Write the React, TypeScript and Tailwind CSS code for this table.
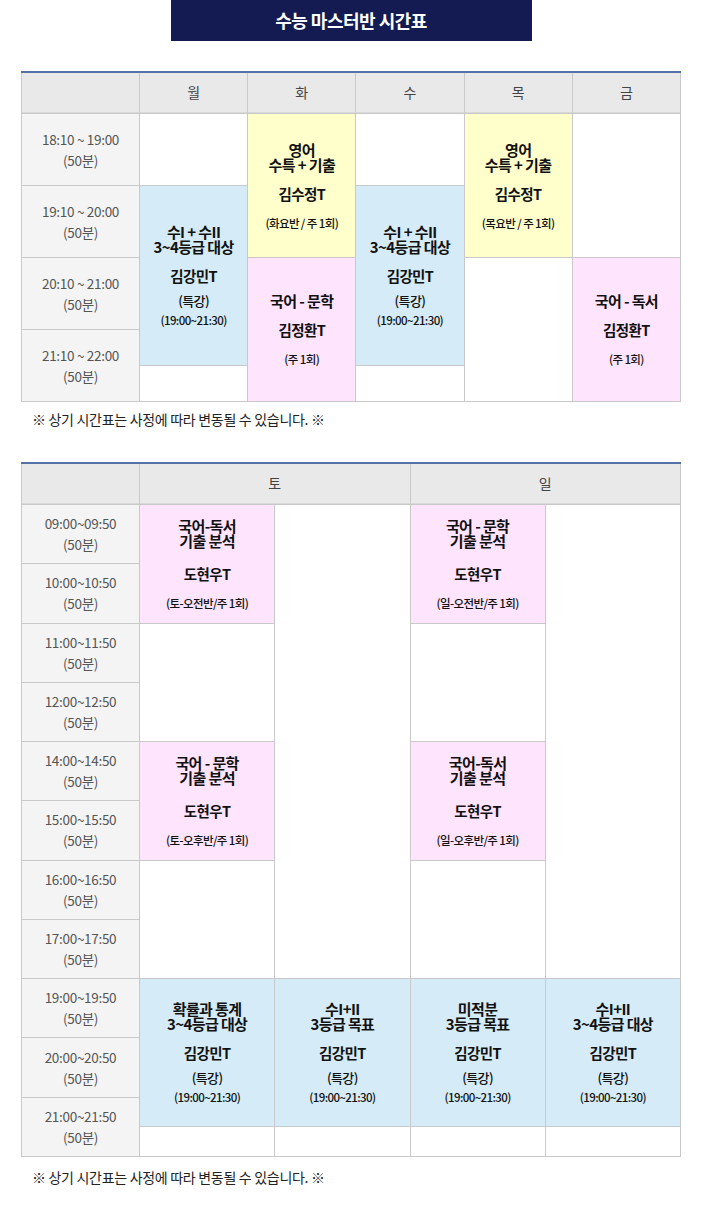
type Tone = 'yellow' | 'blue' | 'pink' | 'white';

const toneBg: Record<Tone, string> = {
  yellow: 'bg-[#ffffcc]',
  blue: 'bg-[#d5ebf7]',
  pink: 'bg-[#ffe4fd]',
  white: 'bg-white',
};

type Lesson = {
  title: string[];
  teacher: string;
  note?: string;
  extra?: string;
};

function LessonBody({ lesson, wide }: { lesson: Lesson; wide?: boolean }) {
  return (
    <div className="flex flex-col items-center text-center text-[#111] tracking-[-0.6px]">
      <div className="text-[15px] font-bold leading-[15px]">
        {lesson.title.map((t) => (
          <p key={t}>{t}</p>
        ))}
      </div>
      <p className={`text-[14.5px] font-bold leading-[15px] ${wide ? 'mt-[18px]' : 'mt-[14px]'}`}>{lesson.teacher}</p>
      {lesson.extra ? (
        <>
          <p className="mt-[10px] text-[13px] font-medium leading-[15px]">{lesson.extra}</p>
          <p className="mt-[6px] text-[11.5px] font-medium leading-[13px]">{lesson.note}</p>
        </>
      ) : (
        <p className="mt-[16px] text-[11.5px] font-medium leading-[13px]">{lesson.note}</p>
      )}
    </div>
  );
}

function Cell({ className, tone, children }: { className: string; tone: Tone; children?: React.ReactNode }) {
  return <div className={`${className} ${toneBg[tone]} flex items-center justify-center`}>{children}</div>;
}

function TimeCell({ className, range }: { className: string; range: string }) {
  return (
    <div className={`${className} bg-[#f4f4f4] flex flex-col items-center justify-center text-[13.5px] leading-[21px] text-[#555] tracking-[-0.3px]`}>
      <p>{range}</p>
      <p>(50분)</p>
    </div>
  );
}

function HeadCell({ className, label }: { className: string; label?: string }) {
  return (
    <div className={`${className} bg-[#e9e9e9] border-b border-[#d9d9d9] flex items-center justify-center text-[14px] text-[#444]`}>
      {label}
    </div>
  );
}

function Note({ className }: { className: string }) {
  return (
    <p className={`${className} pl-[11px] text-[14px] leading-[20px] text-[#222] tracking-[-0.3px]`}>
      ※ 상기 시간표는 사정에 따라 변동될 수 있습니다. ※
    </p>
  );
}

const math34: Lesson = { title: ['수I + 수II', '3~4등급 대상'], teacher: '김강민T', extra: '(특강)', note: '(19:00~21:30)' };

export default function App() {
  return (
    <div className="w-[702px] bg-white font-['Noto_Sans_CJK_KR',sans-serif] pb-[39px]">
      {/* title */}
      <div className="flex justify-center">
        <div className="w-[361px] h-[41px] bg-[#131b52] flex items-center justify-center text-white text-[18px] font-bold tracking-[-0.5px]">
          수능 마스터반 시간표
        </div>
      </div>

      <div className="mx-[21px]">
        {/* weekday table */}
        <div className="mt-[30px] border-t-2 border-[#5571a9]">
          <div className="grid grid-cols-[117px_repeat(5,minmax(0,1fr))] grid-rows-[40px_repeat(8,35px)] gap-px bg-[#c9c9c9] px-px pb-px">
            <HeadCell className="col-start-1 row-start-1" />
            <HeadCell className="col-start-2 row-start-1" label="월" />
            <HeadCell className="col-start-3 row-start-1" label="화" />
            <HeadCell className="col-start-4 row-start-1" label="수" />
            <HeadCell className="col-start-5 row-start-1" label="목" />
            <HeadCell className="col-start-6 row-start-1" label="금" />

            <TimeCell className="col-start-1 row-start-2 row-span-2" range="18:10 ~ 19:00" />
            <TimeCell className="col-start-1 row-start-4 row-span-2" range="19:10 ~ 20:00" />
            <TimeCell className="col-start-1 row-start-6 row-span-2" range="20:10 ~ 21:00" />
            <TimeCell className="col-start-1 row-start-8 row-span-2" range="21:10 ~ 22:00" />

            {/* 월 */}
            <Cell className="col-start-2 row-start-2 row-span-2" tone="white" />
            <Cell className="col-start-2 row-start-4 row-span-5" tone="blue">
              <LessonBody lesson={math34} />
            </Cell>
            <Cell className="col-start-2 row-start-9" tone="white" />

            {/* 화 */}
            <Cell className="col-start-3 row-start-2 row-span-4" tone="yellow">
              <LessonBody lesson={{ title: ['영어', '수특 + 기출'], teacher: '김수정T', note: '(화요반 / 주 1회)' }} />
            </Cell>
            <Cell className="col-start-3 row-start-6 row-span-4" tone="pink">
              <LessonBody lesson={{ title: ['국어 - 문학'], teacher: '김정환T', note: '(주 1회)' }} />
            </Cell>

            {/* 수 */}
            <Cell className="col-start-4 row-start-2 row-span-2" tone="white" />
            <Cell className="col-start-4 row-start-4 row-span-5" tone="blue">
              <LessonBody lesson={math34} />
            </Cell>
            <Cell className="col-start-4 row-start-9" tone="white" />

            {/* 목 */}
            <Cell className="col-start-5 row-start-2 row-span-4" tone="yellow">
              <LessonBody lesson={{ title: ['영어', '수특 + 기출'], teacher: '김수정T', note: '(목요반 / 주 1회)' }} />
            </Cell>
            <Cell className="col-start-5 row-start-6 row-span-4" tone="white" />

            {/* 금 */}
            <Cell className="col-start-6 row-start-2 row-span-4" tone="white" />
            <Cell className="col-start-6 row-start-6 row-span-4" tone="pink">
              <LessonBody lesson={{ title: ['국어 - 독서'], teacher: '김정환T', note: '(주 1회)' }} />
            </Cell>
          </div>
        </div>
        <Note className="mt-[7px]" />

        {/* weekend table */}
        <div className="mt-[33px] border-t-2 border-[#5571a9]">
          <div className="grid h-[693px] grid-cols-[117px_repeat(4,minmax(0,1fr))] grid-rows-[40px_repeat(22,minmax(0,1fr))] gap-px bg-[#c9c9c9] px-px pb-px">
            <HeadCell className="col-start-1 row-start-1" />
            <HeadCell className="col-start-2 col-span-2 row-start-1" label="토" />
            <HeadCell className="col-start-4 col-span-2 row-start-1" label="일" />

            <TimeCell className="col-start-1 row-start-2 row-span-2" range="09:00~09:50" />
            <TimeCell className="col-start-1 row-start-4 row-span-2" range="10:00~10:50" />
            <TimeCell className="col-start-1 row-start-6 row-span-2" range="11:00~11:50" />
            <TimeCell className="col-start-1 row-start-8 row-span-2" range="12:00~12:50" />
            <TimeCell className="col-start-1 row-start-10 row-span-2" range="14:00~14:50" />
            <TimeCell className="col-start-1 row-start-12 row-span-2" range="15:00~15:50" />
            <TimeCell className="col-start-1 row-start-14 row-span-2" range="16:00~16:50" />
            <TimeCell className="col-start-1 row-start-16 row-span-2" range="17:00~17:50" />
            <TimeCell className="col-start-1 row-start-18 row-span-2" range="19:00~19:50" />
            <TimeCell className="col-start-1 row-start-20 row-span-2" range="20:00~20:50" />
            <TimeCell className="col-start-1 row-start-22 row-span-2" range="21:00~21:50" />

            {/* 토 */}
            <Cell className="col-start-2 row-start-2 row-span-4" tone="pink">
              <LessonBody wide lesson={{ title: ['국어-독서', '기출 분석'], teacher: '도현우T', note: '(토-오전반/주 1회)' }} />
            </Cell>
            <Cell className="col-start-2 row-start-6 row-span-4" tone="white" />
            <Cell className="col-start-2 row-start-10 row-span-4" tone="pink">
              <LessonBody wide lesson={{ title: ['국어 - 문학', '기출 분석'], teacher: '도현우T', note: '(토-오후반/주 1회)' }} />
            </Cell>
            <Cell className="col-start-2 row-start-14 row-span-4" tone="white" />
            <Cell className="col-start-3 row-start-2 row-span-16" tone="white" />
            <Cell className="col-start-2 row-start-18 row-span-5" tone="blue">
              <LessonBody lesson={{ title: ['확률과 통계', '3~4등급 대상'], teacher: '김강민T', extra: '(특강)', note: '(19:00~21:30)' }} />
            </Cell>
            <Cell className="col-start-3 row-start-18 row-span-5" tone="blue">
              <LessonBody lesson={{ title: ['수I+II', '3등급 목표'], teacher: '김강민T', extra: '(특강)', note: '(19:00~21:30)' }} />
            </Cell>
            <Cell className="col-start-2 row-start-23" tone="white" />
            <Cell className="col-start-3 row-start-23" tone="white" />

            {/* 일 */}
            <Cell className="col-start-4 row-start-2 row-span-4" tone="pink">
              <LessonBody wide lesson={{ title: ['국어 - 문학', '기출 분석'], teacher: '도현우T', note: '(일-오전반/주 1회)' }} />
            </Cell>
            <Cell className="col-start-4 row-start-6 row-span-4" tone="white" />
            <Cell className="col-start-4 row-start-10 row-span-4" tone="pink">
              <LessonBody wide lesson={{ title: ['국어-독서', '기출 분석'], teacher: '도현우T', note: '(일-오후반/주 1회)' }} />
            </Cell>
            <Cell className="col-start-4 row-start-14 row-span-4" tone="white" />
            <Cell className="col-start-5 row-start-2 row-span-16" tone="white" />
            <Cell className="col-start-4 row-start-18 row-span-5" tone="blue">
              <LessonBody lesson={{ title: ['미적분', '3등급 목표'], teacher: '김강민T', extra: '(특강)', note: '(19:00~21:30)' }} />
            </Cell>
            <Cell className="col-start-5 row-start-18 row-span-5" tone="blue">
              <LessonBody lesson={{ title: ['수I+II', '3~4등급 대상'], teacher: '김강민T', extra: '(특강)', note: '(19:00~21:30)' }} />
            </Cell>
            <Cell className="col-start-4 row-start-23" tone="white" />
            <Cell className="col-start-5 row-start-23" tone="white" />
          </div>
        </div>
        <Note className="mt-[10px]" />
      </div>
    </div>
  );
}
